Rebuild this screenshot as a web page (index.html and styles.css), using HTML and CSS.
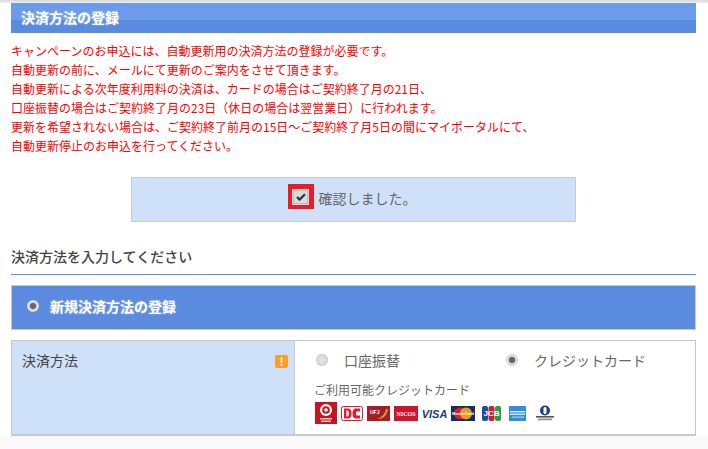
FILE: index.html
```html
<!DOCTYPE html>
<html lang="ja">
<head>
<meta charset="utf-8">
<title>決済方法の登録</title>
<link rel="stylesheet" href="styles.css">
</head>
<body>
<div class="topstrip"></div>
<main class="content">
  <h2 class="section-head">決済方法の登録</h2>
  <div class="notice">
    <p>キャンペーンのお申込には、自動更新用の決済方法の登録が必要です。</p>
    <p>自動更新の前に、メールにて更新のご案内をさせて頂きます。</p>
    <p>自動更新による次年度利用料の決済は、カードの場合はご契約終了月の21日、</p>
    <p>口座振替の場合はご契約終了月の23日（休日の場合は翌営業日）に行われます。</p>
    <p>更新を希望されない場合は、ご契約終了前月の15日～ご契約終了月5日の間にマイポータルにて、</p>
    <p>自動更新停止のお申込を行ってください。</p>
  </div>
  <div class="confirm">
    <span class="check-frame">
      <span class="check-box">
        <svg width="10" height="8" viewBox="0 0 10 8"><path d="M1 4 L3.6 6.6 L9 1.2" fill="none" stroke="#333" stroke-width="2.2"/></svg>
      </span>
    </span>
    <span class="confirm-label">確認しました。</span>
  </div>
  <h3 class="subhead">決済方法を入力してください</h3>
  <div class="newbar">
    <span class="radio on bar-radio"></span>
    <span class="newbar-label">新規決済方法の登録</span>
  </div>
  <div class="formrow">
    <div class="formlabel">
      <span>決済方法</span>
      <span class="warn">!</span>
    </div>
    <div class="formfield">
      <div class="choices">
        <div class="choice first"><span class="radio"></span><span>口座振替</span></div>
        <div class="choice"><span class="radio on"></span><span>クレジットカード</span></div>
      </div>
      <p class="cards-title">ご利用可能クレジットカード</p>
      <div class="cards">
        <svg class="card" width="22" height="22" viewBox="0 0 22 22"><rect width="22" height="22" fill="#c8141e"/><circle cx="11" cy="8" r="6" fill="#fff"/><circle cx="11" cy="8" r="3.8" fill="#c8141e"/><circle cx="11" cy="8" r="1.8" fill="#fff"/><rect x="5" y="16" width="12" height="1.5" fill="#f3c6c8"/><rect x="6" y="18.5" width="10" height="1.5" fill="#f3c6c8"/></svg>
        <svg class="card mid" width="22" height="15" viewBox="0 0 22 15"><rect x=".5" y=".5" width="21" height="14" rx="2" fill="#fff" stroke="#e01c2c"/><path d="M3 2.5h3.5c3 0 4 2 4 5s-1 5-4 5H3z" fill="#e01c2c"/><path d="M5.3 4.5h1c1 0 1.6 1 1.6 3s-.6 3-1.6 3h-1z" fill="#fff"/><path d="M19 2.5h-3.5c-3 0-4 2-4 5s1 5 4 5H19v-3h-3c-.8 0-1-1-1-2s.2-2 1-2h3z" fill="#e01c2c"/></svg>
        <svg class="card mid" width="23" height="15" viewBox="0 0 23 15"><rect width="23" height="15" fill="#a81c24"/><path d="M10 13c7 0 10-4 11-10l-2 0c-1 5-4 8-9 10z" fill="#c9a04a"/><text x="3" y="7.5" class="tiny">UFJ</text></svg>
        <svg class="card mid" width="24" height="15" viewBox="0 0 24 15"><rect width="24" height="15" fill="#d0142c"/><text x="12" y="10" text-anchor="middle" class="tiny2">NICOS</text></svg>
        <svg class="card mid" width="25" height="15" viewBox="0 0 25 15"><text x="12.5" y="12" text-anchor="middle" class="visa">VISA</text></svg>
        <svg class="card mid" width="24" height="15" viewBox="0 0 24 15"><rect width="24" height="15" fill="#12305e"/><circle cx="9" cy="7.5" r="6" fill="#d6202c"/><circle cx="15" cy="7.5" r="6" fill="#ee9a1e"/><text x="12" y="9" text-anchor="middle" class="tiny3">MasterCard</text></svg>
        <svg class="card jcb" width="19" height="15" viewBox="0 0 19 15"><rect width="19" height="15" rx="2" fill="#fff"/><rect x="0" y="0" width="6" height="15" rx="2" fill="#1a4f9c"/><rect x="6.5" y="0" width="6" height="15" rx="2" fill="#c8202c"/><rect x="13" y="0" width="6" height="15" rx="2" fill="#2c9a48"/><text x="9.5" y="10" text-anchor="middle" class="tiny4">JCB</text></svg>
        <svg class="card amex" width="17" height="15" viewBox="0 0 17 15"><rect width="17" height="15" fill="#2f8fd8"/><rect x="1" y="5" width="15" height="1.4" fill="#d6ecfa"/><rect x="1" y="7.5" width="15" height="1.4" fill="#d6ecfa"/><rect x="3" y="10.5" width="12" height="1.2" fill="#a8d4f2"/></svg>
        <svg class="card diners" width="18" height="16" viewBox="0 0 18 16"><circle cx="9" cy="5.5" r="5" fill="#1c3f8c"/><rect x="7.5" y="2" width="3" height="7" rx="1.5" fill="#fff"/><rect x="0" y="11" width="18" height="1.6" fill="#555"/><rect x="2" y="13.6" width="14" height="1.6" fill="#888"/></svg>
      </div>
    </div>
  </div>
</main>
<div class="pagefoot"></div>
</body>
</html>
```

FILE: styles.css
```css
* { box-sizing: border-box; }
html, body { margin: 0; padding: 0; height: 100%; overflow: hidden; }
body {
  display: flex;
  flex-direction: column;
  background: #fff;
  color: #444;
  font-family: "Noto Sans CJK JP", "Noto Sans", sans-serif;
}
p, h2, h3 { margin: 0; }
.topstrip { height: 3px; background: linear-gradient(#d8d8d8, #f0f0f0); }
.content { padding: 0 12px 0 11px; }
.section-head {
  height: 30px;
  padding-left: 10px;
  font-size: 14px;
  font-weight: 700;
  line-height: 29px;
  color: #fff;
  text-shadow: 0 0 2px rgba(255,255,255,.45);
  background: linear-gradient(#6b9bea 0, #6b9bea 57%, #5b8bdf 57%, #5b8bdf 100%);
}
.notice { padding-top: 8px; font-size: 12px; line-height: 19px; color: #f00; }
.confirm {
  display: flex;
  align-items: center;
  justify-content: center;
  width: 445px;
  height: 45px;
  margin: 22px 0 0 120px;
  background: #cfe0f9;
  border: 1px solid #c8ccd4;
}
.check-frame {
  display: flex;
  align-items: center;
  justify-content: center;
  width: 26px;
  height: 25px;
  margin-right: 5px;
  margin-bottom: 6px;
  background: #ed1c24;
}
.check-box {
  display: flex;
  align-items: center;
  justify-content: center;
  width: 15px;
  height: 14px;
  background: #dadada;
  border: 1px solid #bdbdbd;
  box-shadow: 0 0 0 1px #cfe0f9;
}
.confirm-label { width: 101px; margin-bottom: 4px; font-size: 14px; line-height: 20px; color: #666; }
.subhead {
  margin-top: 23px;
  height: 30px;
  font-size: 14px;
  font-weight: 500;
  line-height: 22px;
  color: #444;
  border-bottom: 1px solid #5b8bdf;
}
.newbar {
  display: flex;
  align-items: center;
  height: 45px;
  margin-top: 10px;
  padding-left: 15px;
  background: #5b8bdf;
  border: 1px solid #c8c8c8;
}
.newbar-label {
  margin-left: 11px;
  margin-bottom: 3px;
  font-size: 14px;
  font-weight: 700;
  color: #fff;
  text-shadow: 0 0 2px rgba(255,255,255,.45);
}
.radio {
  flex: none;
  display: inline-block;
  width: 12px;
  height: 12px;
  border-radius: 50%;
  background: radial-gradient(circle, #e4e4e4 0, #d8d8d8 55%, #989898 100%);
}
.radio.on { background: radial-gradient(circle, #666 0, #666 32%, #e2e2e2 44%, #d8d8d8 66%, #989898 100%); }
.bar-radio { margin-bottom: 4px; }
.formrow {
  display: flex;
  height: 96px;
  margin-top: 10px;
  border: 1px solid #c8c8c8;
  border-bottom-width: 2px;
}
.formlabel {
  display: flex;
  justify-content: space-between;
  width: 283px;
  padding: 9px 6px 0 10px;
  font-size: 14px;
  line-height: 20px;
  color: #444;
  background: #cfe0f9;
  border-right: 1px solid #c8c8c8;
}
.warn {
  width: 13px;
  height: 13px;
  margin-top: 5px;
  border-radius: 2px;
  font-size: 11px;
  font-weight: 700;
  line-height: 13px;
  text-align: center;
  color: #fff;
  background: #fb9d2a;
}
.formfield { flex: 1; padding: 8px 0 0 19px; color: #666; }
.choices { display: flex; align-items: center; margin-left: 2px; font-size: 14px; line-height: 22px; }
.choice { display: flex; align-items: center; gap: 16px; }
.choice.first { width: 190px; }
.cards-title { margin-top: 10px; font-size: 12px; line-height: 18px; }
.cards { display: flex; align-items: center; margin-top: 3px; margin-left: 1px; height: 22px; }
.card { flex: none; display: block; }
.card.mid { margin-left: 4px; }
.card.jcb { margin-left: 7px; }
.card.amex { margin-left: 8px; }
.card.diners { margin-left: 10px; }
.tiny { font: 700 5px "Liberation Sans", sans-serif; fill: #fff; }
.tiny2 { font: 700 6px "Liberation Serif", serif; fill: #fff; }
.tiny3 { font: 700 4px "Liberation Sans", sans-serif; fill: #fff; }
.tiny4 { font: 700 8px "Liberation Sans", sans-serif; fill: #fff; }
.visa { font: italic 700 11px "Liberation Sans", sans-serif; fill: #17407e; }
.pagefoot { flex: 1; background: #f9f9f9; }
```
